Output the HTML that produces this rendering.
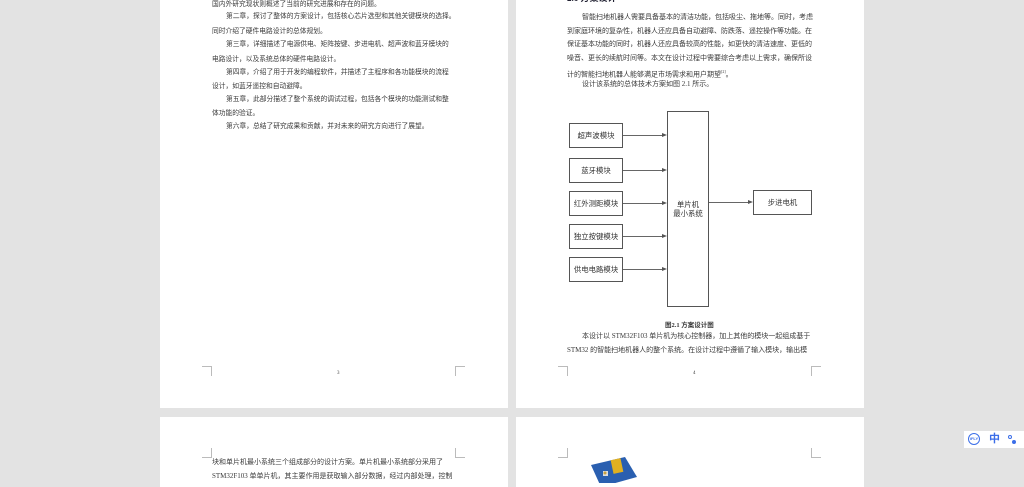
<!DOCTYPE html>
<html><head><meta charset="utf-8"><style>
*{margin:0;padding:0;box-sizing:border-box}
body{width:1024px;height:483px;background:#e3e3e3;position:relative;overflow:hidden;font-family:"Liberation Serif","Noto Sans CJK SC",sans-serif;color:#333}
.pg{position:absolute;background:#fff}
.t{position:absolute;font-size:7px;line-height:9px;white-space:nowrap;color:#3a3a3a;font-family:"Liberation Serif","Noto Sans CJK SC",sans-serif}
.p1{font-size:6.75px}
.cm{position:absolute;width:10px;height:10px;border-color:#bbb;border-style:solid;border-width:0}
.bx{position:absolute;border:1px solid #555;background:#fff;font-size:7.4px;color:#333;display:flex;align-items:center;justify-content:center;text-align:center;line-height:9px;font-family:"Liberation Sans","Noto Sans CJK SC",sans-serif}
.ln{position:absolute;height:1px;background:#666}
.ar{position:absolute;width:0;height:0;border-top:2.5px solid transparent;border-bottom:2.5px solid transparent;border-left:5px solid #555}
</style></head><body>
<div class="pg" style="left:160px;top:0;width:348px;height:408px"></div>
<div class="pg" style="left:516px;top:0;width:348px;height:408px"></div>
<div class="pg" style="left:160px;top:417px;width:348px;height:70px"></div>
<div class="pg" style="left:516px;top:417px;width:348px;height:70px"></div>

<div class="t p1" style="left:212px;top:0px">国内外研究现状则概述了当前的研究进展和存在的问题。</div>
<div class="t p1" style="left:226px;top:12px">第二章，探讨了整体的方案设计，包括核心芯片选型和其他关键模块的选择。</div>
<div class="t p1" style="left:212px;top:27px">同时介绍了硬件电路设计的总体规划。</div>
<div class="t p1" style="left:226px;top:40px">第三章，详细描述了电源供电、矩阵按键、步进电机、超声波和蓝牙模块的</div>
<div class="t p1" style="left:212px;top:55px">电路设计，以及系统总体的硬件电路设计。</div>
<div class="t p1" style="left:226px;top:68px">第四章，介绍了用于开发的编程软件，并描述了主程序和各功能模块的流程</div>
<div class="t p1" style="left:212px;top:82px">设计，如蓝牙遥控和自动避障。</div>
<div class="t p1" style="left:226px;top:95px">第五章，此部分描述了整个系统的调试过程，包括各个模块的功能测试和整</div>
<div class="t p1" style="left:212px;top:109px">体功能的验证。</div>
<div class="t p1" style="left:226px;top:122px">第六章，总结了研究成果和贡献，并对未来的研究方向进行了展望。</div>

<div class="t" style="left:567px;top:-6px;font-weight:bold;font-size:9px;color:#223">2.1 方案设计</div>
<div class="t" style="left:582px;top:13px">智能扫地机器人需要具备基本的清洁功能，包括吸尘、拖地等。同时，考虑</div>
<div class="t" style="left:567px;top:27px">到家庭环境的复杂性，机器人还应具备自动避障、防跌落、遥控操作等功能。在</div>
<div class="t" style="left:567px;top:40px">保证基本功能的同时，机器人还应具备较高的性能，如更快的清洁速度、更低的</div>
<div class="t" style="left:567px;top:54px">噪音、更长的续航时间等。本文在设计过程中需要综合考虑以上需求，确保所设</div>
<div class="t" style="left:567px;top:67px">计的智能扫地机器人能够满足市场需求和用户期望<sup style="font-size:4px">[2]</sup>。</div>
<div class="t" style="left:582px;top:80px">设计该系统的总体技术方案如图 2.1 所示。</div>

<div class="bx" style="left:569px;top:123px;width:54px;height:25px">超声波模块</div>
<div class="bx" style="left:569px;top:158px;width:54px;height:25px">蓝牙模块</div>
<div class="bx" style="left:569px;top:191px;width:54px;height:25px">红外测距模块</div>
<div class="bx" style="left:569px;top:224px;width:54px;height:25px">独立按键模块</div>
<div class="bx" style="left:569px;top:257px;width:54px;height:25px">供电电路模块</div>
<div class="bx" style="left:667px;top:111px;width:42px;height:196px">单片机<br>最小系统</div>
<div class="bx" style="left:753px;top:190px;width:59px;height:25px">步进电机</div>
<div class="ln" style="left:623px;top:135px;width:40px"></div><div class="ar" style="left:662px;top:133px"></div>
<div class="ln" style="left:623px;top:170px;width:40px"></div><div class="ar" style="left:662px;top:168px"></div>
<div class="ln" style="left:623px;top:203px;width:40px"></div><div class="ar" style="left:662px;top:201px"></div>
<div class="ln" style="left:623px;top:236px;width:40px"></div><div class="ar" style="left:662px;top:234px"></div>
<div class="ln" style="left:623px;top:269px;width:40px"></div><div class="ar" style="left:662px;top:267px"></div>
<div class="ln" style="left:709px;top:202px;width:40px"></div><div class="ar" style="left:748px;top:200px"></div>

<div class="t" style="left:665px;top:321px;font-weight:bold;font-size:6.5px">图2.1 方案设计图</div>
<div class="t" style="left:582px;top:332px">本设计以 STM32F103 单片机为核心控制器，加上其他的模块一起组成基于</div>
<div class="t" style="left:567px;top:346px">STM32 的智能扫地机器人的整个系统。在设计过程中遵循了输入模块，输出模</div>
<div class="t" style="left:337px;top:369px;font-size:5px">3</div>
<div class="t" style="left:693px;top:369px;font-size:5px">4</div>

<div class="cm" style="left:202px;top:366px;border-top-width:1px;border-right-width:1px"></div>
<div class="cm" style="left:455px;top:366px;border-top-width:1px;border-left-width:1px"></div>
<div class="cm" style="left:558px;top:366px;border-top-width:1px;border-right-width:1px"></div>
<div class="cm" style="left:811px;top:366px;border-top-width:1px;border-left-width:1px"></div>
<div class="cm" style="left:202px;top:448px;border-bottom-width:1px;border-right-width:1px"></div>
<div class="cm" style="left:455px;top:448px;border-bottom-width:1px;border-left-width:1px"></div>
<div class="cm" style="left:558px;top:448px;border-bottom-width:1px;border-right-width:1px"></div>
<div class="cm" style="left:811px;top:448px;border-bottom-width:1px;border-left-width:1px"></div>

<div class="t" style="left:212px;top:458px">块和单片机最小系统三个组成部分的设计方案。单片机最小系统部分采用了</div>
<div class="t" style="left:212px;top:472px">STM32F103 单单片机，其主要作用是获取输入部分数据，经过内部处理，控制</div>

<svg style="position:absolute;left:585px;top:455px" width="60" height="28" viewBox="0 0 60 28">
<polygon points="6,10 40,2 52,22 16,32" fill="#2a5fb0"/>
<rect x="27" y="4" width="10" height="14" fill="#e0b020" transform="rotate(-12 32 11)"/>
<rect x="18" y="16" width="5" height="5" fill="#ddd"/>
<circle cx="20" cy="18" r="1.5" fill="#c8a040"/>
</svg>

<div style="position:absolute;left:964px;top:431px;width:60px;height:17px;background:#fff"></div>
<div style="position:absolute;left:968px;top:433px;width:12px;height:12px;border:1.5px solid #3b6ee8;border-radius:50%;font-size:4px;color:#3b6ee8;text-align:center;line-height:9px;font-family:'Liberation Sans',sans-serif;font-weight:bold">iFLY</div>
<div style="position:absolute;left:989px;top:432px;font-size:11px;color:#3b6ee8;font-family:'Noto Sans CJK SC',sans-serif;font-weight:bold;line-height:13px">中</div>
<div style="position:absolute;left:1008px;top:435px;width:4px;height:4px;border:1px solid #3b6ee8;border-radius:50%"></div>
<div style="position:absolute;left:1012px;top:440px;width:4px;height:4px;background:#3b6ee8;border-radius:50%"></div>
</body></html>
